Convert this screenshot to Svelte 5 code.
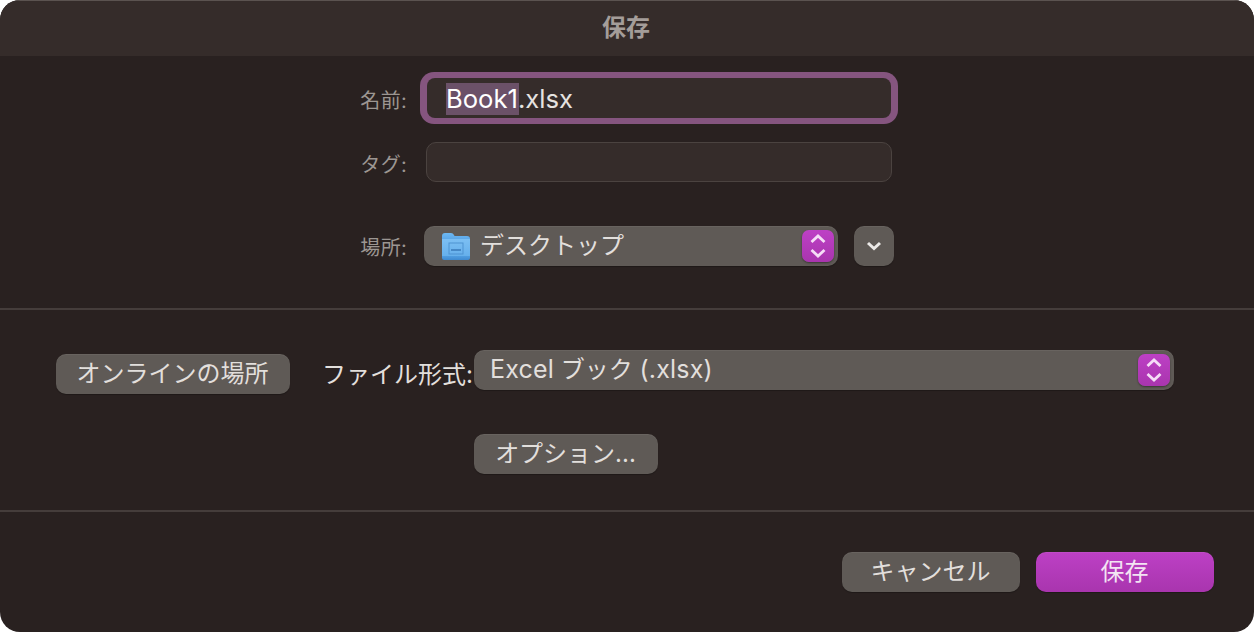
<script>
	const stepperUp = 'M4.5 10 L11 4 L17.5 10';
	const stepperDown = 'M4.5 18 L11 24 L17.5 18';
</script>

<div class="dialog">
	<header class="titlebar">保存</header>

	<section class="form">
		<div class="row name-row">
			<span class="label">名前:</span>
			<div class="ring">
				<div class="field name"><span class="sel">Book1</span>.xlsx</div>
			</div>
		</div>
		<div class="row tag-row">
			<span class="label">タグ:</span>
			<div class="field tags"></div>
		</div>
		<div class="row place-row">
			<span class="label">場所:</span>
			<div class="popup place">
				<svg class="folder" width="30" height="29" viewBox="0 0 30 29">
					<defs>
						<linearGradient id="folder-back" x1="0" y1="0" x2="0" y2="1">
							<stop offset="0" stop-color="#6db8f2" />
							<stop offset="1" stop-color="#4f9be0" />
						</linearGradient>
						<linearGradient id="folder-front" x1="0" y1="0" x2="0" y2="1">
							<stop offset="0" stop-color="#7cbff3" />
							<stop offset="0.8" stop-color="#66b0ec" />
							<stop offset="0.82" stop-color="#4f9ce0" />
							<stop offset="1" stop-color="#3f8ad0" />
						</linearGradient>
					</defs>
					<path d="M1 4 Q1 1 4 1 H10 Q12 1 13 3 L13.5 4 H26 Q29 4 29 7 V12 H1 Z" fill="url(#folder-back)" />
					<path d="M1 7 H29 V26 Q29 28 27 28 H3 Q1 28 1 26 Z" fill="url(#folder-front)" />
					<rect x="8" y="11" width="14" height="11" fill="none" stroke="#4e93d2" stroke-width="1" />
					<rect x="10" y="17" width="10" height="2" fill="#4688c6" />
				</svg>
				<span class="popup-text">デスクトップ</span>
				<span class="stepper">
					<svg width="22" height="28" viewBox="0 0 22 28"><path d={stepperUp} /><path d={stepperDown} /></svg>
				</span>
			</div>
			<button class="btn disclosure" aria-label="展開">
				<svg width="16" height="10" viewBox="0 0 16 10"><path d="M2 2 L8 7.5 L14 2" /></svg>
			</button>
		</div>
	</section>

	<section class="options">
		<button class="btn online">オンラインの場所</button>
		<span class="format-label">ファイル形式:</span>
		<div class="format-col">
			<div class="popup format">
				<span class="popup-text"><span class="latin">Excel</span> ブック <span class="latin">(.xlsx)</span></span>
				<span class="stepper">
					<svg width="22" height="28" viewBox="0 0 22 28"><path d={stepperUp} /><path d={stepperDown} /></svg>
				</span>
			</div>
			<button class="btn option">オプション...</button>
		</div>
	</section>

	<footer class="actions">
		<button class="btn cancel">キャンセル</button>
		<button class="btn save">保存</button>
	</footer>
</div>

<style>
	:global(body) {
		margin: 0;
		background: #fff;
	}
	.dialog {
		width: 1254px;
		height: 632px;
		display: flex;
		flex-direction: column;
		background: #292120;
		border-radius: 20px;
		overflow: hidden;
		font-family: Inter, "Noto Sans CJK JP", sans-serif;
		font-size: 24px;
		color: #e2dfdc;
	}
	.titlebar {
		height: 56px;
		flex: none;
		display: flex;
		align-items: center;
		justify-content: center;
		padding-bottom: 7px;
		padding-right: 2px;
		box-sizing: border-box;
		background: #352c2a;
		border-top: 1px solid #5b5350;
		font-weight: 700;
		color: #a49d99;
	}
	.form {
		height: 254px;
		flex: none;
		box-sizing: border-box;
		border-bottom: 2px solid #453d3b;
		position: relative;
	}
	.row {
		display: flex;
		align-items: center;
	}
	.label {
		width: 407px;
		flex: none;
		text-align: right;
		font-size: 20px;
		letter-spacing: 0.3px;
		color: #9c9692;
	}
	.name-row {
		margin-top: 17px;
		height: 50px;
	}
	.name-row .label {
		padding-top: 2px;
	}
	.ring {
		margin-left: 13px;
		width: 478px;
		height: 52px;
		box-sizing: border-box;
		padding: 6px 7px;
		border-radius: 14px;
		background: #85557f;
	}
	.field {
		box-sizing: border-box;
		background: #352c2a;
		border-radius: 8px;
	}
	.name {
		height: 100%;
		padding-left: 19px;
		padding-top: 2px;
		display: flex;
		align-items: center;
		font-size: 25.6px;
		line-height: 32px;
		color: #e6e3e0;
	}
	.sel {
		background: #6b5168;
		color: #fff;
		padding-right: 1px;
		margin-right: -1px;
	}
	.tag-row {
		margin-top: 19px;
		height: 40px;
	}
	.tag-row .label {
		padding-top: 3px;
	}
	.tags {
		margin-left: 19px;
		width: 466px;
		height: 40px;
		border: 1px solid #4b4340;
		border-radius: 10px;
	}
	.place-row {
		margin-top: 44px;
		height: 40px;
	}
	.popup {
		height: 40px;
		box-sizing: border-box;
		display: flex;
		align-items: center;
		background: #5f5a56;
		border-radius: 10px;
		box-shadow: inset 0 1px 0 rgba(255, 255, 255, 0.06), 0 1px 1px rgba(0, 0, 0, 0.25);
		position: relative;
	}
	.place {
		margin-left: 17px;
		width: 414px;
		padding-left: 17px;
	}
	.folder {
		flex: none;
		margin-right: 9px;
	}
	.popup-text {
		position: relative;
		top: -3px;
	}
	.latin {
		font-size: 25px;
		letter-spacing: 0.2px;
	}
	.stepper {
		position: absolute;
		right: 4px;
		top: 4px;
		width: 32px;
		height: 32px;
		border-radius: 7px;
		display: flex;
		align-items: center;
		justify-content: center;
		background: linear-gradient(#bd40c5, #a935ae);
		box-shadow: 0 1px 2px rgba(0, 0, 0, 0.4);
	}
	.stepper path {
		fill: none;
		stroke: #f5dcf6;
		stroke-width: 2.8;
	}
	.btn {
		height: 40px;
		padding: 0 0 6px;
		border: none;
		border-radius: 10px;
		background: #5f5a56;
		box-shadow: inset 0 1px 0 rgba(255, 255, 255, 0.06), 0 1px 1px rgba(0, 0, 0, 0.25);
		font: inherit;
		color: inherit;
		display: flex;
		align-items: center;
		justify-content: center;
		flex: none;
	}
	.disclosure {
		width: 40px;
		margin-left: 16px;
		padding: 0;
	}
	.disclosure path {
		fill: none;
		stroke: #eceae8;
		stroke-width: 3;
	}
	.options {
		height: 202px;
		flex: none;
		box-sizing: border-box;
		border-bottom: 2px solid #453d3b;
		padding-left: 56px;
		display: flex;
		align-items: flex-start;
	}
	.online {
		margin-top: 44px;
		width: 234px;
		padding-right: 1px;
	}
	.format-label {
		margin-top: 44px;
		margin-left: 32px;
		width: 152px;
		flex: none;
		line-height: 40px;
		white-space: nowrap;
		position: relative;
		top: 1px;
	}
	.format-col {
		margin-top: 40px;
	}
	.format {
		width: 700px;
		padding-left: 16px;
	}
	.option {
		margin-top: 44px;
		width: 184px;
		padding-right: 1px;
	}
	.actions {
		flex: 1;
		display: flex;
		justify-content: flex-end;
		gap: 16px;
		padding: 40px 40px 0 0;
	}
	.cancel,
	.save {
		width: 178px;
		padding-right: 1px;
	}
	.save {
		background: linear-gradient(#bd40c5, #a935ae);
		color: #f3e4f3;
	}
</style>
